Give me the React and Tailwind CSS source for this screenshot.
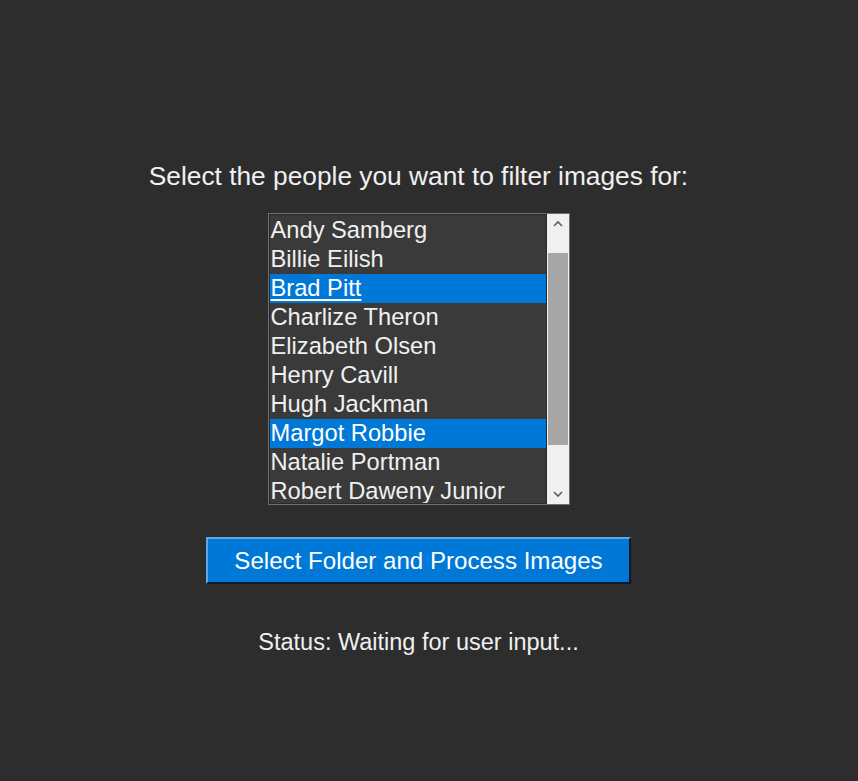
import React from "react";

const people = [
  "Andy Samberg",
  "Billie Eilish",
  "Brad Pitt",
  "Charlize Theron",
  "Elizabeth Olsen",
  "Henry Cavill",
  "Hugh Jackman",
  "Margot Robbie",
  "Natalie Portman",
  "Robert Daweny Junior",
];

const selected = new Set(["Brad Pitt", "Margot Robbie"]);

export default function App() {
  return (
    <div
      className="w-full h-[781px] bg-[#2d2d2d] flex flex-col items-center pt-[161px] pr-[21px] text-[#f0f0f0]"
      style={{ fontFamily: '"Liberation Sans", Arial, sans-serif' }}
    >
      <div className="text-[26.3px] leading-[30px]">Select the people you want to filter images for:</div>

      <div className="mt-[22px] w-[302px] h-[292px] flex border border-[#6e6e6e] bg-[#3a3a3a]">
        <div className="flex-1 overflow-hidden border border-[#2a2a2a] pt-[1px]">
          {people.map((p) => (
            <div
              key={p}
              className={
                "h-[29px] leading-[29px] text-[23.7px] pl-[1px] whitespace-nowrap " +
                (selected.has(p) ? "bg-[#0078d7] text-white" : "")
              }
            >
              <span className={p === "Brad Pitt" ? "underline underline-offset-[3px]" : ""}>{p}</span>
            </div>
          ))}
        </div>
        <div className="w-[22px] bg-[#f0f0f0] flex flex-col">
          <div className="h-[39px] flex justify-center pt-[6px]">
            <svg width="10" height="7" viewBox="0 0 10 7">
              <path d="M1 6 L5 2 L9 6" stroke="#606060" strokeWidth="1.6" fill="none" />
            </svg>
          </div>
          <div className="h-[192px] mx-[1px] bg-[#a6a6a6]" />
          <div className="flex-1 flex justify-center items-end pb-[6px]">
            <svg width="10" height="7" viewBox="0 0 10 7">
              <path d="M1 1 L5 5 L9 1" stroke="#606060" strokeWidth="1.6" fill="none" />
            </svg>
          </div>
        </div>
      </div>

      <button
        className="mt-[32px] w-[425px] h-[47px] pt-[2px] bg-[#0078d7] text-white text-[24.1px] border-t-2 border-l-2 border-[#5aa6e6] border-r-2 border-b-2 border-r-[#0a1a2a] border-b-[#0a1a2a]"
        style={{ fontFamily: '"Liberation Sans", Arial, sans-serif' }}
      >
        Select Folder and Process Images
      </button>

      <div className="mt-[44px] text-[23.5px] leading-[28px]">Status: Waiting for user input...</div>
    </div>
  );
}
